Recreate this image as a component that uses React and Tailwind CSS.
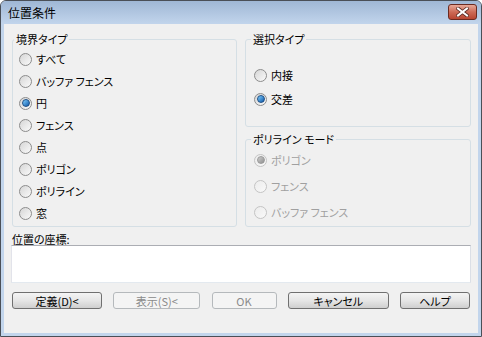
import React from 'react'

function Radio({ checked, disabled }) {
  return (
    <span
      className={`flex w-[13px] h-[13px] shrink-0 items-center justify-center rounded-full border ${
        disabled
          ? 'border-[#c4c4c4] bg-gradient-to-br from-[#ececec] to-[#f9f9f9]'
          : 'border-[#8c8c8c] bg-gradient-to-br from-[#d6d6d6] to-[#fafafa]'
      }`}
    >
      {checked && (
        <span
          className={`block w-[8px] h-[8px] rounded-full border ${
            disabled
              ? 'border-[#9a9a9a] bg-gradient-to-br from-[#cfcfcf] to-[#8f8f8f]'
              : 'border-[#1d4f86] bg-gradient-to-br from-[#7fd0ff] to-[#0b58a8]'
          }`}
        />
      )}
    </span>
  )
}

function Option({ label, checked, disabled, height }) {
  return (
    <div className={`flex items-center gap-[4px] ${height}`}>
      <Radio checked={checked} disabled={disabled} />
      <span className={`text-[11px] leading-[14px] ${disabled ? 'text-[#a0a0a0]' : 'text-black'}`}>{label}</span>
    </div>
  )
}

function Group({ title, legendOffset, className, children }) {
  return (
    <fieldset className={`border border-[#d5dfe5] rounded-[3px] ${className}`}>
      <legend className={`${legendOffset} px-[2px] text-[11px] leading-[14px] text-black`}>{title}</legend>
      {children}
    </fieldset>
  )
}

function Button({ label, width, disabled }) {
  return (
    <div
      className={`flex h-[17px] items-center justify-center rounded-[3px] border text-[11px] leading-[14px] ${width} ${
        disabled
          ? 'border-[#b5b9bc] bg-[#f4f4f4] text-[#8a8a8a]'
          : 'border-[#707070] bg-gradient-to-b from-[#f4f4f4] via-[#e6e6e6] to-[#cfcfcf] text-black'
      }`}
    >
      {label}
    </div>
  )
}

const boundary = ['すべて', 'バッファ フェンス', '円', 'フェンス', '点', 'ポリゴン', 'ポリライン', '窓']

export default function App() {
  return (
    <div className="w-[482px] h-[337px] bg-white font-[Noto_Sans_CJK_JP,Noto_Sans,sans-serif] [font-feature-settings:'palt']">
      <div className="flex h-full flex-col rounded-t-[6px] border border-[#4a4f57] bg-[#c2d5ec]">
        {/* title bar */}
        <div className="flex h-[23px] items-start justify-between rounded-t-[5px] bg-gradient-to-b from-[#9fb7d5] to-[#c2d5ec]">
          <span className="pl-[7px] pt-[5px] text-[12px] leading-[14px] text-black">位置条件</span>
          <div className="mr-[4px] mt-[3px] flex h-[16px] w-[29px] items-center justify-center rounded-[3px] border border-[#6b2a20] bg-gradient-to-b from-[#e7a898] via-[#cd6a56] to-[#b94531]">
            <svg width="13" height="10" viewBox="0 0 13 10">
              <path d="M2 1.5 L11 8.5 M11 1.5 L2 8.5" stroke="#5a2a22" strokeWidth="3.6" strokeLinecap="square" />
              <path d="M2 1.5 L11 8.5 M11 1.5 L2 8.5" stroke="#ffffff" strokeWidth="2" strokeLinecap="square" />
            </svg>
          </div>
        </div>

        {/* client area */}
        <div className="mx-[3px] mb-[3px] flex-1 bg-[#f0f0f0] pt-[8px]">
          <div className="flex gap-[8px] pl-[8px]">
            <Group title="境界タイプ" legendOffset="ml-[1px]" className="h-[195px] w-[225px]">
              <div className="pl-[6px] pt-[2px]">
                {boundary.map((b) => (
                  <Option key={b} label={b} checked={b === '円'} height="h-[22px]" />
                ))}
              </div>
            </Group>

            <div className="flex flex-col gap-[5px]">
              <Group title="選択タイプ" legendOffset="ml-[5px]" className="h-[95px] w-[226px]">
                <div className="pl-[8px] pt-[17px]">
                  <Option label="内接" height="h-[24px]" />
                  <Option label="交差" checked height="h-[24px]" />
                </div>
              </Group>
              <Group title="ポリライン モード" legendOffset="ml-[5px]" className="h-[95px] w-[226px]">
                <div className="pl-[8px] pt-[1px]">
                  <Option label="ポリゴン" checked disabled height="h-[26px]" />
                  <Option label="フェンス" disabled height="h-[26px]" />
                  <Option label="バッファ フェンス" disabled height="h-[26px]" />
                </div>
              </Group>
            </div>
          </div>

          <div className="mt-[7px] pl-[8px] text-[11px] leading-[11px] text-black">位置の座標:</div>
          <div className="ml-[7px] h-[38px] w-[460px] border border-[#abadb3] border-l-[#e2e3ea] border-r-[#dbdfe6] border-b-[#e3e9ef] bg-white" />

          <div className="mt-[9px] ml-[8px] flex w-[458px] justify-between">
            <Button label="定義(D)<" width="w-[90px]" />
            <Button label="表示(S)<" width="w-[87px]" disabled />
            <Button label="OK" width="w-[65px]" disabled />
            <Button label="キャンセル" width="w-[101px]" />
            <Button label="ヘルプ" width="w-[70px]" />
          </div>
        </div>
      </div>
    </div>
  )
}
